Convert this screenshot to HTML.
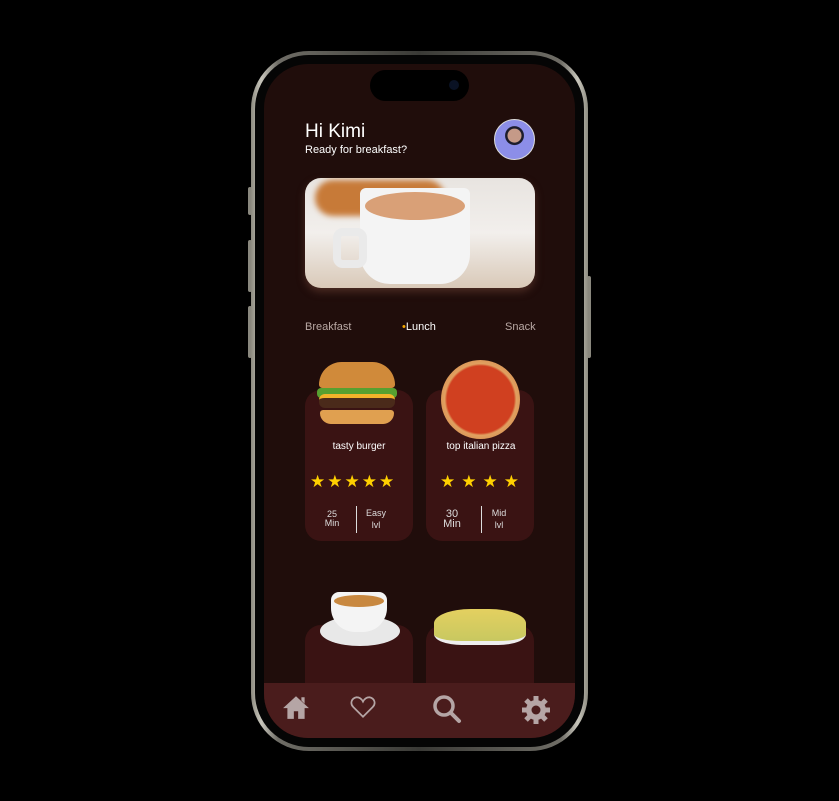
<!DOCTYPE html>
<html><head><meta charset="utf-8"><style>
*{margin:0;padding:0;box-sizing:border-box}
body{width:839px;height:801px;background:#000;position:relative;overflow:hidden;font-family:"Liberation Sans",sans-serif;color:#fff}
.abs{position:absolute}
.frame{left:251px;top:51px;width:337px;height:700px;border-radius:58px;background:linear-gradient(90deg,#8d8b80,#c8c6bc 3%,#6f6d66 8%,#3a3a36 50%,#6f6d66 92%,#c8c6bc 97%,#8d8b80)}
.bezel{left:255px;top:55px;width:329px;height:692px;border-radius:54px;background:#050505}
.screen{left:264px;top:64px;width:311px;height:674px;border-radius:44px;background:#200d0b;overflow:hidden}
.island{left:370px;top:70px;width:99px;height:31px;border-radius:16px;background:#000}
.btn{background:#8a887e;width:4px;border-radius:2px}
.card{background:#3a1313;border-radius:16px;width:108px}
.star{color:#ffd000;font-size:17px}
.cap{font-size:10px;color:#ddd;text-align:center}
.nav{left:0;top:619px;width:311px;height:55px;background:#4a1c1c}
</style></head><body>
<div class="abs btn" style="left:248px;top:187px;height:28px"></div>
<div class="abs btn" style="left:248px;top:240px;height:52px"></div>
<div class="abs btn" style="left:248px;top:306px;height:52px"></div>
<div class="abs btn" style="left:587px;top:276px;height:82px"></div>
<div class="abs frame"></div>
<div class="abs bezel"></div>
<div class="abs screen">
  <div class="abs" style="left:41px;top:57px;font-size:19px">Hi Kimi</div>
  <div class="abs" style="left:41px;top:80px;font-size:11px">Ready for breakfast?</div>
  <div class="abs" style="left:230px;top:55px;width:41px;height:41px;border-radius:50%;background:radial-gradient(circle at 50% 40%,#c59a88 0 22%,#1c1c2c 24% 30%,#8c8ee8 32%);border:1px solid #ddd"></div>
  <div class="abs" style="left:41px;top:114px;width:230px;height:110px;border-radius:16px;overflow:hidden;background:linear-gradient(180deg,#e8e4e0,#f2efec 50%,#d9c9b8);box-shadow:0 4px 8px #4a2a22">
    <div class="abs" style="left:10px;top:2px;width:130px;height:36px;border-radius:20px;background:#c77a38;filter:blur(3px)"></div>
    <div class="abs" style="left:55px;top:10px;width:110px;height:96px;border-radius:6px 6px 30px 30px;background:#f4f4f4"></div>
    <div class="abs" style="left:60px;top:14px;width:100px;height:28px;border-radius:50%;background:#d9a077"></div>
    <div class="abs" style="left:28px;top:50px;width:34px;height:40px;border:8px solid #eaeaea;border-radius:10px"></div>
  </div>
  <div class="abs" style="left:41px;top:257px;font-size:11px;color:#b9a9a5">Breakfast</div>
  <div class="abs" style="left:138px;top:257px;font-size:11px"><span style="color:#f5a800">•</span>Lunch</div>
  <div class="abs" style="left:241px;top:257px;font-size:11px;color:#b9a9a5">Snack</div>

  <div class="abs card" style="left:41px;top:326px;height:151px"></div>
  <div class="abs card" style="left:162px;top:326px;height:151px"></div>
  <div class="abs" style="left:55px;top:298px;width:76px;height:26px;border-radius:40px 40px 6px 6px;background:#d08a3a"></div>
  <div class="abs" style="left:53px;top:324px;width:80px;height:10px;background:#57a030;border-radius:4px"></div>
  <div class="abs" style="left:55px;top:330px;width:76px;height:14px;background:#4a2a1a;border-radius:6px;border-top:4px solid #f2b32a"></div>
  <div class="abs" style="left:56px;top:346px;width:74px;height:14px;background:#e0a050;border-radius:4px 4px 14px 14px"></div>
  <div class="abs" style="left:177px;top:296px;width:79px;height:79px;border-radius:50%;background:radial-gradient(circle,#d04020 0 60%,#e0a060 64%,#c87a40)"></div>
  <div class="abs cap" style="left:41px;top:377px;width:108px;font-size:10px;color:#fff">tasty burger</div>
  <div class="abs cap" style="left:177px;top:377px;width:80px;font-size:10px;color:#fff;white-space:nowrap">top italian pizza</div>
  <div class="abs star" style="left:46px;top:408px;letter-spacing:2px">★★★★★</div>
  <div class="abs star" style="left:176px;top:408px;letter-spacing:6px">★★★★</div>
  <div class="abs cap" style="left:58px;top:446px;font-size:9px;line-height:9px;width:20px">25<br>Min</div>
  <div class="abs" style="left:92px;top:442px;width:1px;height:27px;background:#ddd"></div>
  <div class="abs cap" style="left:100px;top:443px;font-size:9px;line-height:12px;width:24px">Easy<br>lvl</div>
  <div class="abs cap" style="left:177px;top:445px;font-size:11px;line-height:10px;width:22px">30<br>Min</div>
  <div class="abs" style="left:217px;top:442px;width:1px;height:27px;background:#ddd"></div>
  <div class="abs cap" style="left:224px;top:443px;font-size:9px;line-height:12px;width:22px">Mid<br>lvl</div>

  <div class="abs card" style="left:41px;top:561px;height:80px"></div>
  <div class="abs card" style="left:162px;top:561px;height:80px"></div>
  <div class="abs" style="left:56px;top:552px;width:80px;height:30px;border-radius:50%;background:#e8e8e8"></div>
  <div class="abs" style="left:67px;top:528px;width:56px;height:40px;border-radius:8px 8px 24px 24px;background:#f4f4f4"></div>
  <div class="abs" style="left:70px;top:531px;width:50px;height:12px;border-radius:50%;background:#c88840"></div>
  <div class="abs" style="left:170px;top:545px;width:92px;height:36px;background:linear-gradient(#e4d060,#c8c860);border-radius:40% 40% 30% 30%;border-bottom:4px solid #eee"></div>

  <div class="abs nav">
    <svg class="abs" style="left:18px;top:11px" width="28" height="26" viewBox="0 0 26 24"><path d="M13 2L1 13h4v10h6v-7h4v7h6V13h4L13 2zM18 3h3v6l-3-3z" fill="#b5a5a5"/></svg>
    <svg class="abs" style="left:86px;top:12px" width="26" height="24" viewBox="0 0 24 22"><path d="M12 20L3 11C0 8 1 3 6 2c3 0 5 2 6 4 1-2 3-4 6-4 5 1 6 6 3 9z" fill="none" stroke="#b5a5a5" stroke-width="1.6"/></svg>
    <svg class="abs" style="left:168px;top:11px" width="30" height="30" viewBox="0 0 30 30"><circle cx="12" cy="12" r="9" fill="none" stroke="#b5a5a5" stroke-width="3.5"/><path d="M19 19l8 8" stroke="#b5a5a5" stroke-width="4" stroke-linecap="round"/></svg>
    <svg class="abs" style="left:257px;top:12px" width="30" height="30" viewBox="0 0 30 30"><g fill="#b5a5a5"><circle cx="15" cy="15" r="10"/><g stroke="#b5a5a5" stroke-width="5"><path d="M15 1v28M1 15h28M5 5l20 20M25 5L5 25"/></g></g><circle cx="15" cy="15" r="4.5" fill="#4a1c1c"/></svg>
  </div>
</div>
<div class="abs island"></div>
<div class="abs" style="left:449px;top:80px;width:10px;height:10px;border-radius:50%;background:#0a1224"></div>
</body></html>
